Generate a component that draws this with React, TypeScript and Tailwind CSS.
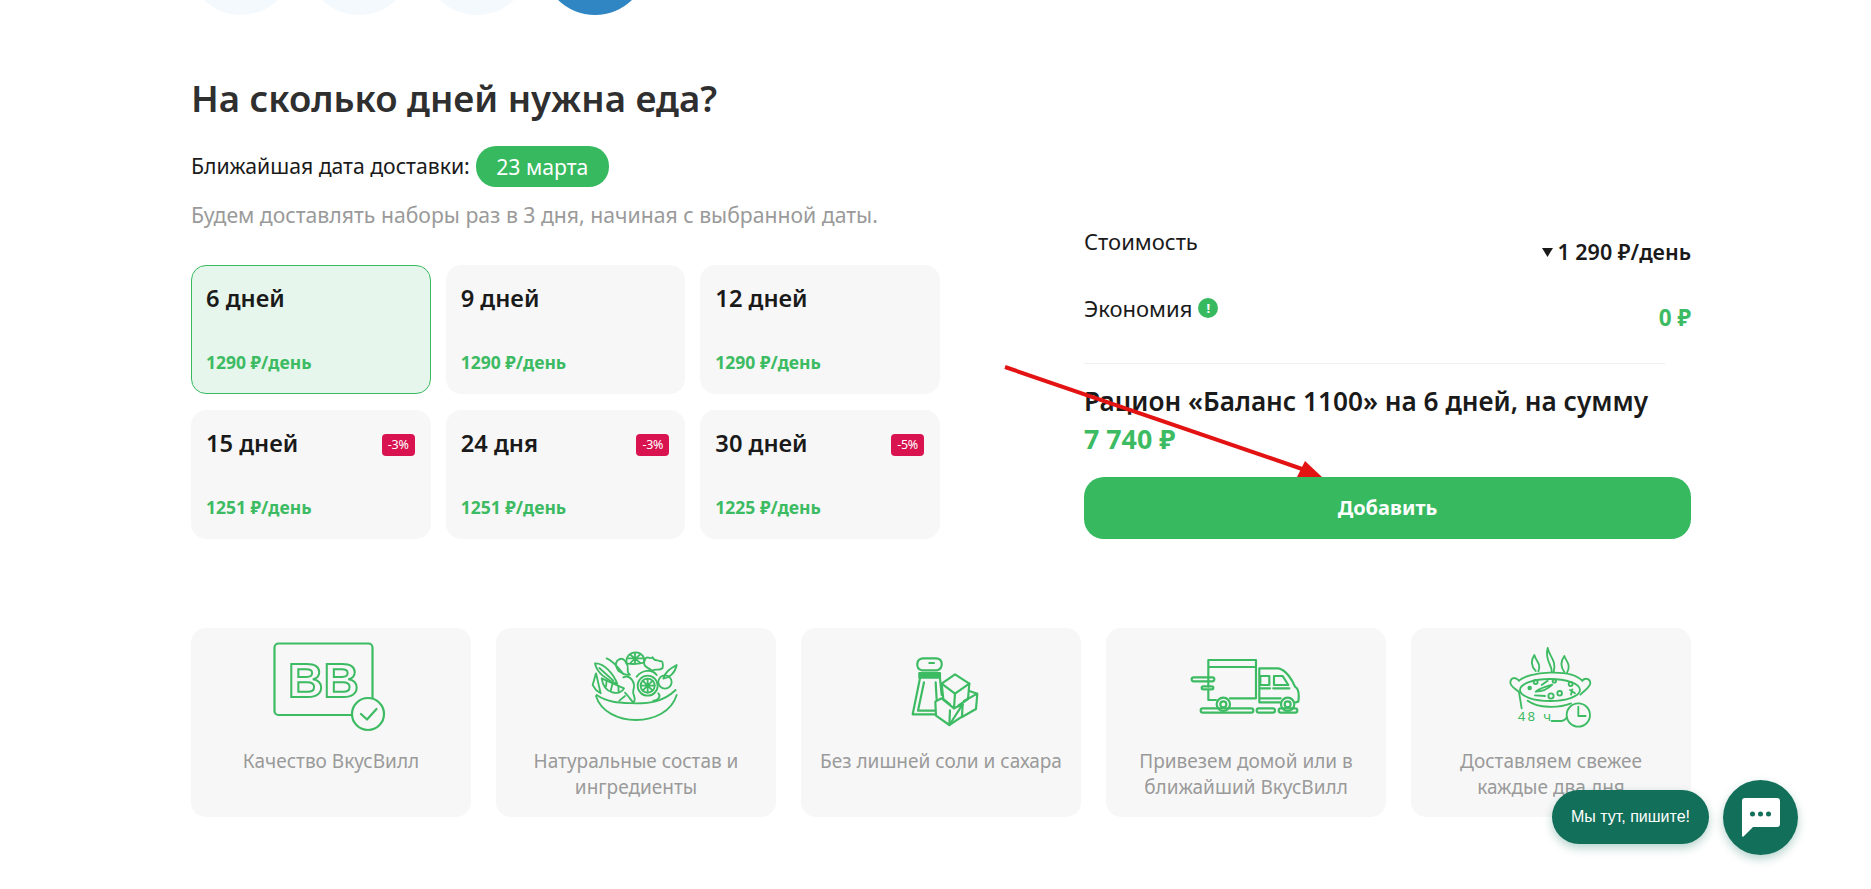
import React from "react";

const G = "#3dbb63";

function IconBox({ dx, dy, children, sw = 6 }: { dx: number; dy: number; children: React.ReactNode; sw?: number }) {
  return (
    <svg width="140" height="110" viewBox="0 0 140 110" className="shrink-0" fill="none" stroke={G} strokeLinecap="round" strokeLinejoin="round">
      <g transform={`translate(${dx} ${dy}) scale(0.3333)`} strokeWidth={sw}>
        {children}
      </g>
    </svg>
  );
}

function QualityIcon() {
  return (
    <svg width="140" height="110" viewBox="0 0 140 110" className="shrink-0" fill="none" stroke={G} strokeLinecap="round" strokeLinejoin="round">
      <rect x="13.500" y="5.500" width="98" height="71.500" rx="4" strokeWidth="2.200" />
      <text x="27" y="59" fontFamily="'Liberation Sans', sans-serif" fontWeight="700" fontSize="49" strokeWidth="2" fill="none" strokeLinejoin="miter">BB</text>
      <circle cx="107" cy="76" r="16" fill="#f7f7f7" strokeWidth="2.200" />
      <path d="M100 76 L106 81.500 L115.500 71" strokeWidth="2.200" />
    </svg>
  );
}

function SaladIcon() {
  return (
    <IconBox dx={14} dy={2} sw={5.500}>
      <path d="M48 168 C62 215 115 240 168 240 C222 240 275 215 290 165" />
      <path d="M50 165 C90 192 130 188 168 190 C210 190 250 185 287 150" />
      <path d="M45 70 C70 68 100 100 112 132 C85 122 50 100 45 70Z" />
      <path d="M80 55 C100 62 122 92 130 102 M58 84 L100 122" />
      <path d="M38 135 L48 100 L62 160 L48 150Z" />
      <path d="M65 115 L132 145 C122 168 72 165 65 115Z" />
      <path d="M98 130 L92 152 M115 138 L116 155 M80 122 L78 140" />
      <circle cx="203" cy="137" r="30" />
      <circle cx="203" cy="137" r="21" />
      <path d="M203 116 L203 158 M182 137 L224 137 M188 122 L218 152 M218 122 L188 152" />
      <path d="M140 70 C136 50 152 36 168 37 C185 38 196 52 192 68 C175 72 160 74 140 70Z" />
      <path d="M165 40 L165 70 M145 55 L190 55 M152 45 L180 68 M180 44 L152 68" />
      <path d="M112 62 C125 50 135 58 140 72 C150 80 135 95 150 104 C130 108 122 96 115 92 C108 80 104 72 112 62Z" />
      <path d="M195 58 C200 44 208 60 218 52 C222 66 235 58 240 64 C248 60 250 72 248 84 C238 94 226 84 218 92 C200 82 186 78 195 58Z" />
      <path d="M290 75 C285 100 268 114 250 116 C255 96 270 86 290 75Z" />
      <circle cx="255" cy="126" r="20" />
      <path d="M130 112 C150 102 168 128 160 150 C156 165 172 176 160 188 C150 176 142 165 135 158" />
      <path d="M170 110 C185 90 215 85 230 105" />
      <path d="M235 160 C245 170 232 182 220 182 M135 168 L118 182" />
    </IconBox>
  );
}

function SaltIcon() {
  return (
    <IconBox dx={19} dy={7} sw={6.500}>
      <path d="M95 76 C76 70 78 42 98 40 L140 40 C160 42 160 70 142 76 Z" />
      <path d="M118 54 L132 54" />
      <rect x="88" y="84" width="62" height="14" fill={G} />
      <path d="M90 100 L68 208 L135 208 M150 100 L155 150" />
      <path d="M102 112 L84 197 L134 197 M137 112 L140 165" />
      <path d="M195 88 L238 116 L195 146 L155 116 Z" />
      <path d="M155 116 L160 162 L180 178 M195 146 L192 190 M238 116 L234 162 L205 182" />
      <path d="M136 170 L155 160 L192 190 L218 178 L178 240 L138 212Z" />
      <path d="M178 240 L180 196 M218 178 L216 215 L178 240" />
      <path d="M238 138 L262 146 L258 192 L216 216 M222 168 L262 146" />
    </IconBox>
  );
}

function TruckIcon() {
  return (
    <IconBox dx={4} dy={7} sw={6.500}>
      <path d="M85 125 L85 45 L228 45 L228 160 L150 160 M85 66 L228 66 M85 138 L85 165 L108 165" />
      <path d="M238 70 L295 70 C320 75 338 108 345 125 C356 130 358 148 355 170 L347 172 M238 70 L238 172 L300 172 M238 160 L302 160" />
      <rect x="241" y="93" width="27" height="27" />
      <path d="M282 93 L308 93 L325 120 L282 120Z" />
      <path d="M240 130 L270 130 M280 130 L328 130" strokeWidth="7" />
      <circle cx="130" cy="178" r="20" fill="#f7f7f7" />
      <circle cx="130" cy="178" r="9" />
      <circle cx="323" cy="178" r="20" fill="#f7f7f7" />
      <circle cx="323" cy="178" r="9" />
      <rect x="35" y="97" width="68" height="12" rx="6" />
      <rect x="65" y="124" width="35" height="9" rx="4.500" />
      <rect x="62" y="190" width="158" height="13" rx="6.500" />
      <rect x="230" y="190" width="55" height="13" rx="6.500" />
      <rect x="296" y="190" width="56" height="13" rx="6.500" />
    </IconBox>
  );
}

function PanIcon() {
  return (
    <IconBox dx={14} dy={2} sw={5.500}>
      <path d="M122 93 C108 78 108 60 118 45 C122 62 140 72 130 94" />
      <path d="M170 95 C172 75 148 60 158 24 C162 48 186 62 176 96" />
      <path d="M208 96 C196 80 198 62 208 48 C212 62 230 74 216 98" />
      <path d="M72 122 C100 96 225 84 262 122" />
      <ellipse cx="165" cy="150" rx="90" ry="33" />
      <path d="M72 122 C60 110 48 112 46 126 C44 138 60 145 72 156 L80 205" />
      <path d="M262 122 C270 112 284 116 286 128 C288 140 270 150 256 164" />
      <path d="M98 182 C130 205 190 205 228 190" />
      <circle cx="122" cy="126" r="6" />
      <circle cx="178" cy="123" r="5" />
      <circle cx="227" cy="132" r="6" />
      <circle cx="104" cy="144" r="4" fill={G} />
      <circle cx="168" cy="168" r="8" />
      <circle cx="194" cy="160" r="7" />
      <path d="M122 155 C142 155 158 148 172 134 C160 138 140 142 122 155Z" />
      <path d="M140 135 L158 122 M120 166 L150 168 M225 150 L240 160 M232 148 L228 164" />
      <circle cx="250" cy="225" r="35" fill="#f7f7f7" />
      <path d="M250 200 L250 228 L272 228" />
      <path d="M170 243 L200 243 C208 243 212 238 216 232" />
      <text x="68" y="244" fontFamily="'Noto Sans', sans-serif" fontSize="40" fill={G} stroke="none" letterSpacing="7">48 ч</text>
    </IconBox>
  );
}

const options = [
  { t: "6 дней", p: "1290 ₽/день", active: true },
  { t: "9 дней", p: "1290 ₽/день" },
  { t: "12 дней", p: "1290 ₽/день" },
  { t: "15 дней", p: "1251 ₽/день", d: "-3%" },
  { t: "24 дня", p: "1251 ₽/день", d: "-3%" },
  { t: "30 дней", p: "1225 ₽/день", d: "-5%" },
];

const features = [
  { icon: <QualityIcon />, text: "Качество ВкусВилл" },
  { icon: <SaladIcon />, text: "Натуральные состав и ингредиенты" },
  { icon: <SaltIcon />, text: "Без лишней соли и сахара" },
  { icon: <TruckIcon />, text: "Привезем домой или в ближайший ВкусВилл" },
  { icon: <PanIcon />, text: "Доставляем свежее каждые два дня" },
];

export default function App() {
  return (
    <div className="relative h-[889px] w-full overflow-hidden bg-white font-['Noto_Sans',sans-serif] text-[#1a1a1a]">
      <div className="ml-[191px] w-[1500px]">
        <div className="-ml-[3px] flex h-[15px] items-end gap-3 overflow-hidden">
          <div className="h-[106px] w-[106px] shrink-0 rounded-full bg-[#f3f9fd]" />
          <div className="h-[106px] w-[106px] shrink-0 rounded-full bg-[#f3f9fd]" />
          <div className="h-[106px] w-[106px] shrink-0 rounded-full bg-[#f3f9fd]" />
          <div className="h-[106px] w-[106px] shrink-0 rounded-full bg-[#2f86c3]" />
        </div>

        <h1 className="mt-[61px] h-[46px] text-[36.600px] leading-[44px] font-semibold text-[#2f2f2f]">На сколько дней нужна еда?</h1>

        <div className="flex items-end justify-between">
          <div className="w-[749px]">
            <div className="mt-[24px] flex h-[41px] items-center gap-[6px] text-[21.200px]">
              <span className="-mt-px">Ближайшая дата доставки:</span>
              <span className="flex h-[41px] w-[133px] items-center justify-center rounded-[20px] bg-[#37b95f] text-white">23 марта</span>
            </div>
            <p className="mt-[15px] h-[27px] text-[21.200px] leading-[26px] text-[#9a9a9a]">Будем доставлять наборы раз в 3 дня, начиная с выбранной даты.</p>
            <div className="mt-[36px] grid grid-cols-3 grid-rows-[129px_129px] gap-x-[15px] gap-y-[16px]">
              {options.map((o) => (
                <div
                  key={o.t}
                  className={
                    o.active
                      ? "flex flex-col justify-between rounded-[15px] border border-[#37b95f] bg-[#e7f6ec] px-[14px] pt-[19px] pb-[20px]"
                      : "flex flex-col justify-between rounded-[15px] border border-[#f7f7f7] bg-[#f7f7f7] px-[14px] pt-[19px] pb-[20px]"
                  }
                >
                  <div className="flex items-start justify-between">
                    <span className="text-[23.700px] leading-[26px] font-semibold">{o.t}</span>
                    {o.d && (
                      <span className="mt-[4px] mr-px flex h-[22px] w-[33px] items-center justify-center rounded-[4px] bg-[#d9134f] text-[12.500px] tracking-tight text-white">{o.d}</span>
                    )}
                  </div>
                  <span className="text-[17.500px] leading-[22px] font-bold text-[#3dbb63]">{o.p}</span>
                </div>
              ))}
            </div>
          </div>

          <div className="w-[607px]">
            <div className="flex h-[66px] items-start justify-between">
              <span className="-mt-px text-[22px] leading-[26px]">Стоимость</span>
              <span className="mt-[10px] flex items-center gap-[4px] text-[21.500px] leading-[26px] font-semibold">
                <svg width="11" height="9" viewBox="0 0 10 8"><path d="M0 0H10L5 8Z" fill="#1a1a1a" /></svg>
                1 290 ₽/день
              </span>
            </div>
            <div className="flex h-[68px] items-start justify-between">
              <span className="flex items-center gap-[6px] text-[22px] leading-[26px]">
                <span>Экономия</span>
                <span className="flex h-[20px] w-[20px] items-center justify-center rounded-full bg-[#37b95f] text-[13px] leading-none font-bold text-white">!</span>
              </span>
              <span className="mt-[10px] text-[22.500px] leading-[26px] font-bold text-[#3dbb63]">0 ₽</span>
            </div>
            <div className="w-[581px] border-t border-[#f0f0f0]" />
            <div className="mt-[20px] text-[26.200px] leading-[34px] font-semibold">Рацион «Баланс 1100» на 6 дней, на сумму</div>
            <div className="mt-[3px] text-[26.800px] leading-[36px] font-bold text-[#3dbb63]">7 740 ₽</div>
            <button className="mt-[20px] flex h-[62px] w-full items-center justify-center rounded-[20px] bg-[#37b95f] text-[20px] font-bold text-white">Добавить</button>
          </div>
        </div>

        <div className="mt-[89px] grid grid-cols-5 gap-[25px]">
          {features.map((f) => (
            <div key={f.text} className="flex h-[189px] flex-col items-center rounded-[15px] bg-[#f7f7f7] px-[15px] pt-[10px]">
              {f.icon}
              <p className="text-center text-[19px] leading-[26px] text-[#9a9a9a]">{f.text}</p>
            </div>
          ))}
        </div>
      </div>

      <svg className="pointer-events-none absolute top-0 left-0" width="1871" height="889" fill="none">
        <path d="M1005 367 L1305 470" stroke="#e31313" strokeWidth="4" />
        <polygon points="1322,477 1297,477 1305,461" fill="#e31313" />
      </svg>

      <div className="absolute top-[790px] left-[1552px] flex h-[54px] w-[157px] items-center justify-center rounded-[27px] bg-[#126f5a] font-['Liberation_Sans',sans-serif] text-[16px] font-medium text-white shadow-[0_4px_10px_rgba(18,111,90,0.3)]">
        Мы тут, пишите!
      </div>
      <div className="absolute top-[780px] left-[1723px] flex h-[75px] w-[75px] items-center justify-center rounded-full bg-[#126f5a] shadow-[0_4px_10px_rgba(18,111,90,0.3)]">
        <svg width="38" height="39" viewBox="0 0 38 39">
          <path d="M3 0H35A3 3 0 0 1 38 3V26A3 3 0 0 1 35 29H11L2 38A1 1 0 0 1 0 37V3A3 3 0 0 1 3 0Z" fill="#fff" />
          <circle cx="10.500" cy="16" r="2.500" fill="#126f5a" />
          <circle cx="18.500" cy="16" r="2.500" fill="#126f5a" />
          <circle cx="26.500" cy="16" r="2.500" fill="#126f5a" />
        </svg>
      </div>
    </div>
  );
}
